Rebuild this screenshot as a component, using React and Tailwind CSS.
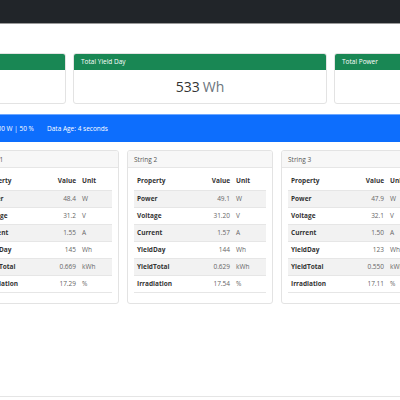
const TOTALS = [
  { title: "Total Yield Total", value: "1.848", unit: "kWh" },
  { title: "Total Yield Day", value: "533", unit: "Wh" },
  { title: "Total Power", value: "145.4", unit: "W" },
];

const STRINGS = [
  {
    name: "String 1",
    rows: [
      ["Power", "48.4", "W"],
      ["Voltage", "31.2", "V"],
      ["Current", "1.55", "A"],
      ["YieldDay", "145", "Wh"],
      ["YieldTotal", "0.669", "kWh"],
      ["Irradiation", "17.29", "%"],
    ],
  },
  {
    name: "String 2",
    rows: [
      ["Power", "49.1", "W"],
      ["Voltage", "31.20", "V"],
      ["Current", "1.57", "A"],
      ["YieldDay", "144", "Wh"],
      ["YieldTotal", "0.629", "kWh"],
      ["Irradiation", "17.54", "%"],
    ],
  },
  {
    name: "String 3",
    rows: [
      ["Power", "47.9", "W"],
      ["Voltage", "32.1", "V"],
      ["Current", "1.50", "A"],
      ["YieldDay", "123", "Wh"],
      ["YieldTotal", "0.550", "kWh"],
      ["Irradiation", "17.11", "%"],
    ],
  },
];

function TotalCard({ title, value, unit }) {
  return (
    <div className="w-[254px] shrink-0 rounded-[3px] border border-[#e3e3e3] overflow-hidden bg-white">
      <div className="h-[16px] bg-[#198754] text-white text-[6.5px] leading-[16px] pl-[7px]">
        {title}
      </div>
      <div className="h-[33px] flex items-center justify-center text-[14px] leading-none">
        <span className="text-[#333]">{value}</span>
        <span className="text-[#6c757d] ml-[3px]">{unit}</span>
      </div>
    </div>
  );
}

function StringCard({ name, rows }) {
  return (
    <div className="w-[146px] shrink-0 rounded-[3px] border border-[#e3e3e3] bg-white overflow-hidden">
      <div className="h-[17px] bg-[#f7f7f7] border-b border-[#e6e6e6] text-[6.5px] leading-[17px] pl-[6px] text-[#555]">
        {name}
      </div>
      <div className="px-[6px] pt-[5px] pb-[10px]">
        <table className="w-full text-[6.5px] border-collapse">
          <thead>
            <tr className="h-[17px] border-b border-[#e6e6e6]">
              <th className="text-left font-bold pl-[3px] text-[#333]">Property</th>
              <th className="text-right font-bold pr-[3px] text-[#333]">Value</th>
              <th className="text-left font-bold pl-[3px] w-[33px] text-[#333]">Unit</th>
            </tr>
          </thead>
          <tbody>
            {rows.map(([prop, val, unit], i) => (
              <tr
                key={prop}
                className={
                  "h-[17px] border-b border-[#e6e6e6] " +
                  (i % 2 === 0 ? "bg-[#f2f2f2]" : "bg-white")
                }
              >
                <td className="pl-[3px] font-bold text-[#333]">{prop}</td>
                <td className="text-right pr-[3px] text-[#666]">{val}</td>
                <td className="pl-[3px] text-[#666]">{unit}</td>
              </tr>
            ))}
          </tbody>
        </table>
      </div>
    </div>
  );
}

export default function App() {
  return (
    <div
      className="w-[400px] h-[400px] overflow-hidden bg-white flex flex-col"
      style={{ fontFamily: '"Open Sans", "Noto Sans", sans-serif' }}
    >
      <div className="h-[24px] shrink-0 bg-[#212529] border-b border-[#9a9a9a]" />

      <div className="flex gap-[7px] ml-[-188px] mt-[29px]">
        {TOTALS.map((t) => (
          <TotalCard key={t.title} {...t} />
        ))}
      </div>

      <div className="mt-[10px] h-[28px] shrink-0 bg-[#0d6efd] border-t border-[#6ea8fe] flex items-center text-white text-[6.5px]">
        <span className="shrink-0 w-[300px] ml-[-266px] text-right whitespace-nowrap">
          Inverter is reachable | Current Limit: 400 W | 50 %
        </span>
        <span className="ml-[13px] whitespace-nowrap">Data Age: 4 seconds</span>
      </div>

      <div className="flex gap-[8px] ml-[-27px] mt-[8px]">
        {STRINGS.map((s) => (
          <StringCard key={s.name} {...s} />
        ))}
      </div>

      <div className="mt-auto h-[4px] shrink-0 border-t border-[#e5e5e5]" />
    </div>
  );
}
